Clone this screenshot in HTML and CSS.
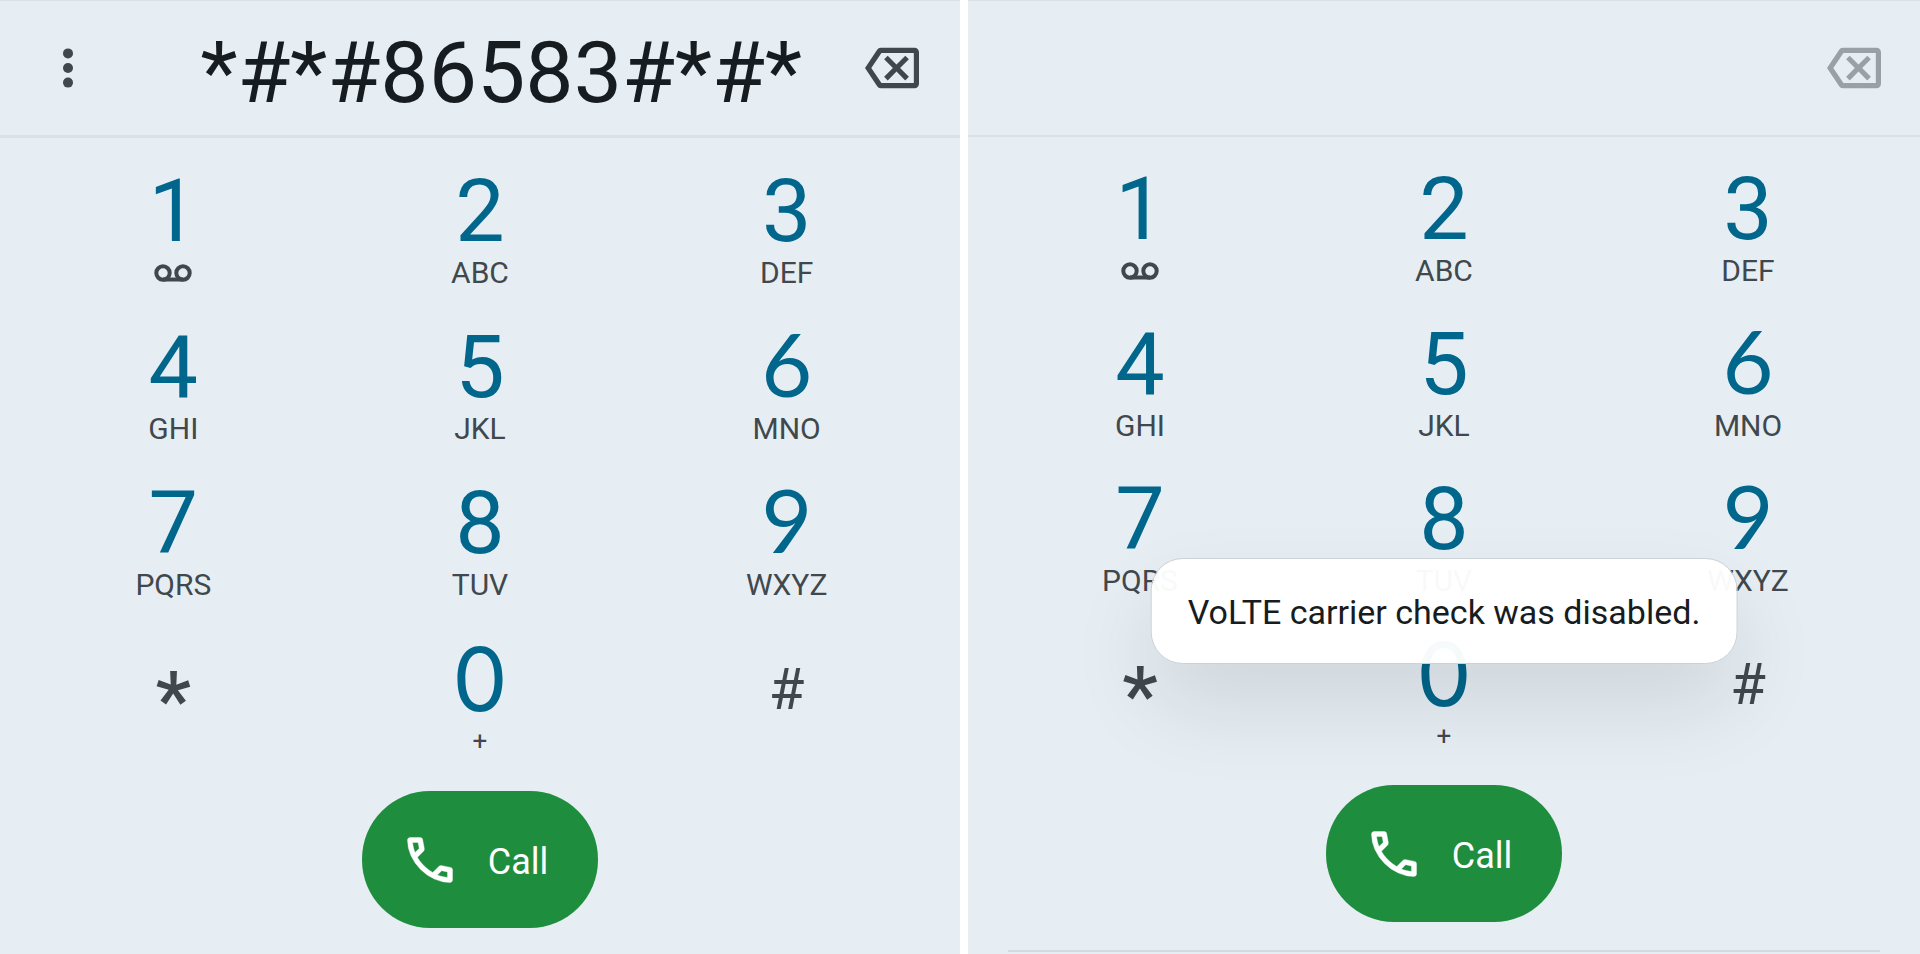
FILE: index.html
```html
<!DOCTYPE html>
<html lang="en">
<head>
    <meta charset="UTF-8">
    <meta name="viewport" content="width=device-width, initial-scale=1.0">
    <title>Phone</title>
    <link rel="stylesheet" href="styles.css">
</head>
<body>
    <svg class="icon-defs" aria-hidden="true">
        <symbol id="icon-more" viewBox="0 0 24 24">
            <circle cx="12" cy="4.7" r="2.5"/>
            <circle cx="12" cy="12" r="2.5"/>
            <circle cx="12" cy="19.3" r="2.5"/>
        </symbol>
        <symbol id="icon-backspace" viewBox="0 0 24 24">
            <path d="M22 3H7c-.69 0-1.23.35-1.59.88L0 12l5.41 8.11c.36.53.9.89 1.59.89h15c1.1 0 2-.9 2-2V5c0-1.1-.9-2-2-2zm-.3 15.7H7.3L2.8 12l4.5-6.7h14.4v13.4zm-11.6-1.2L14 13.6 17.9 17.5 19.5 15.9 15.6 12 19.5 8.1 17.9 6.5 14 10.4 10.1 6.5 8.5 8.1 12.4 12 8.5 15.9z"/>
        </symbol>
        <symbol id="icon-voicemail" viewBox="0 0 38 18">
            <g fill="none" stroke="currentColor" stroke-width="4">
                <circle cx="9" cy="9" r="6.7"/>
                <circle cx="29" cy="9" r="6.7"/>
                <path d="M9 15.5h20"/>
            </g>
        </symbol>
        <symbol id="icon-call" viewBox="0 -960 960 960">
            <path d="M798-120q-125 0-247-54.5T329-329Q229-429 174.5-551T120-798q0-18 12-30t30-12h162q14 0 25 9.5t13 22.5l26 140q2 16-1 27t-11 19l-97 98q20 37 47.5 71.5T387-386q31 31 65 57.5t72 48.5l94-94q9-9 23.5-13.5T670-390l138 28q14 4 23 14.5t9 23.5v162q0 18-12 30t-30 12ZM241-600l66-66-17-94h-89q5 41 14 81t26 79Zm358 358q39 17 79.5 27t81.5 13v-88l-94-19-67 67Z" stroke="currentColor" stroke-width="6"/>
        </symbol>
    </svg>

    <main class="screens">
        <section class="dialer">
            <div class="dialer-header">
                <button type="button" class="icon-button" aria-label="More options"><svg class="icon-more"><use href="#icon-more"/></svg></button>
                <input type="text" class="number" aria-label="Phone number" value="*#*#86583#*#*">
                <button type="button" class="icon-button" aria-label="Backspace"><svg class="icon-backspace"><use href="#icon-backspace"/></svg></button>
            </div>
            <div class="keypad">
                <button type="button" class="key"><span class="digit">1</span><span class="letters"><svg class="icon-voicemail"><use href="#icon-voicemail"/></svg></span></button>
                <button type="button" class="key"><span class="digit">2</span><span class="letters">ABC</span></button>
                <button type="button" class="key"><span class="digit">3</span><span class="letters">DEF</span></button>
                <button type="button" class="key"><span class="digit">4</span><span class="letters">GHI</span></button>
                <button type="button" class="key"><span class="digit">5</span><span class="letters">JKL</span></button>
                <button type="button" class="key"><span class="digit round">6</span><span class="letters">MNO</span></button>
                <button type="button" class="key"><span class="digit">7</span><span class="letters">PQRS</span></button>
                <button type="button" class="key"><span class="digit">8</span><span class="letters">TUV</span></button>
                <button type="button" class="key"><span class="digit round">9</span><span class="letters">WXYZ</span></button>
                <button type="button" class="key"><span class="star">*</span></button>
                <button type="button" class="key"><span class="digit zero">0</span><span class="letters plus">+</span></button>
                <button type="button" class="key"><span class="pound">#</span></button>
            </div>
            <button type="button" class="call-button"><svg class="icon-call"><use href="#icon-call"/></svg><span class="call-label">Call</span></button>
        </section>

        <section class="dialer compact">
            <div class="dialer-header">
                <input type="text" class="number" aria-label="Phone number" value="">
                <button type="button" class="icon-button" aria-label="Backspace" disabled><svg class="icon-backspace"><use href="#icon-backspace"/></svg></button>
            </div>
            <div class="keypad">
                <button type="button" class="key"><span class="digit">1</span><span class="letters"><svg class="icon-voicemail"><use href="#icon-voicemail"/></svg></span></button>
                <button type="button" class="key"><span class="digit">2</span><span class="letters">ABC</span></button>
                <button type="button" class="key"><span class="digit">3</span><span class="letters">DEF</span></button>
                <button type="button" class="key"><span class="digit">4</span><span class="letters">GHI</span></button>
                <button type="button" class="key"><span class="digit">5</span><span class="letters">JKL</span></button>
                <button type="button" class="key"><span class="digit round">6</span><span class="letters">MNO</span></button>
                <button type="button" class="key"><span class="digit">7</span><span class="letters">PQRS</span></button>
                <button type="button" class="key"><span class="digit">8</span><span class="letters">TUV</span></button>
                <button type="button" class="key"><span class="digit round">9</span><span class="letters">WXYZ</span></button>
                <button type="button" class="key"><span class="star">*</span></button>
                <button type="button" class="key"><span class="digit zero">0</span><span class="letters plus">+</span></button>
                <button type="button" class="key"><span class="pound">#</span></button>
            </div>
            <button type="button" class="call-button"><svg class="icon-call"><use href="#icon-call"/></svg><span class="call-label">Call</span></button>
            <hr class="bottom-line">
            <div class="toast" role="status">VoLTE carrier check was disabled.</div>
        </section>
    </main>
</body>
</html>
```
FILE: styles.css
```css
* {
    margin: 0;
    padding: 0;
    box-sizing: border-box;
}

body {
    background: #fff;
    font-family: Roboto, "Open Sans", sans-serif;
    color: #41484d;
}

button {
    background: none;
    border: none;
    font: inherit;
    color: inherit;
    cursor: pointer;
}

svg {
    display: block;
    fill: currentColor;
}

.icon-defs {
    position: absolute;
    width: 0;
    height: 0;
}

.screens {
    display: grid;
    grid-template-columns: 50% 1fr;
    column-gap: 8px;
    min-height: 100vh;
}

.dialer {
    position: relative;
    display: flex;
    flex-direction: column;
    background: #e6eef4;
    overflow: hidden;
}

/* Number display */
.dialer-header {
    display: flex;
    align-items: center;
    height: 138px;
    border-top: 1px solid #dae1e7;
    border-bottom: 3px solid #dae1e7;
}

.compact .dialer-header {
    height: 137px;
    border-bottom-width: 2px;
}

.icon-button {
    display: flex;
    justify-content: center;
    flex: none;
    width: 136px;
}

.compact .icon-button {
    width: 132px;
}

.icon-button:disabled {
    color: #9b9fa8;
    cursor: default;
}

.icon-more {
    width: 48px;
    height: 48px;
}

.icon-backspace {
    width: 54px;
    height: 54px;
}

.number {
    flex: 1;
    min-width: 0;
    height: 112px;
    padding: 8px 22px 0;
    background: none;
    border: none;
    outline: none;
    font: inherit;
    font-size: 86px;
    text-align: right;
    color: #171c20;
}

/* Keys */
.keypad {
    display: grid;
    grid-template-columns: repeat(3, 1fr);
    grid-auto-rows: 124px;
    row-gap: 32px;
    padding: 29px 20px 32px;
}

.compact .keypad {
    row-gap: 31px;
    padding: 28px 20px 31px;
}

.key {
    display: flex;
    flex-direction: column;
    align-items: center;
}

.digit {
    font-size: 88px;
    line-height: 88px;
    color: #00668b;
}

/* Lato sits lower in the line than Roboto */
.round {
    margin-bottom: 8px;
    font-family: Lato, Roboto, sans-serif;
    line-height: 80px;
}

.zero {
    font-family: Inter, Roboto, sans-serif;
}

.letters {
    display: flex;
    align-items: center;
    height: 36px;
    font-size: 30px;
    line-height: 36px;
}

.plus {
    font-size: 26px;
}

.star {
    font-size: 80px;
    font-weight: 500;
    line-height: 132px;
}

.pound {
    font-size: 58px;
    line-height: 108px;
}

.icon-voicemail {
    width: 38px;
    height: 18px;
}

.call-button {
    display: flex;
    align-items: center;
    align-self: center;
    gap: 28px;
    height: 137px;
    padding: 0 50px 0 38px;
    border-radius: 68px;
    background: #1e8e3e;
    color: #fff;
    font-size: 36px;
}

.call-label {
    padding-top: 4px;
}

.icon-call {
    width: 60px;
    height: 60px;
}

.bottom-line {
    margin: 28px 40px 0;
    border: none;
    border-top: 2px solid #d3dae3;
}

/* Toast */
.toast {
    position: absolute;
    left: 50%;
    bottom: 290px;
    transform: translateX(-50%);
    padding: 33px 36px 31px;
    border: 1px solid #cdd2d8;
    border-radius: 32px;
    background: rgba(255, 255, 255, 0.97);
    background-clip: padding-box;
    box-shadow: 0 42px 84px rgba(0, 0, 0, 0.1);
    color: #171c20;
    font-size: 34px;
    line-height: 40px;
    white-space: nowrap;
}
```
